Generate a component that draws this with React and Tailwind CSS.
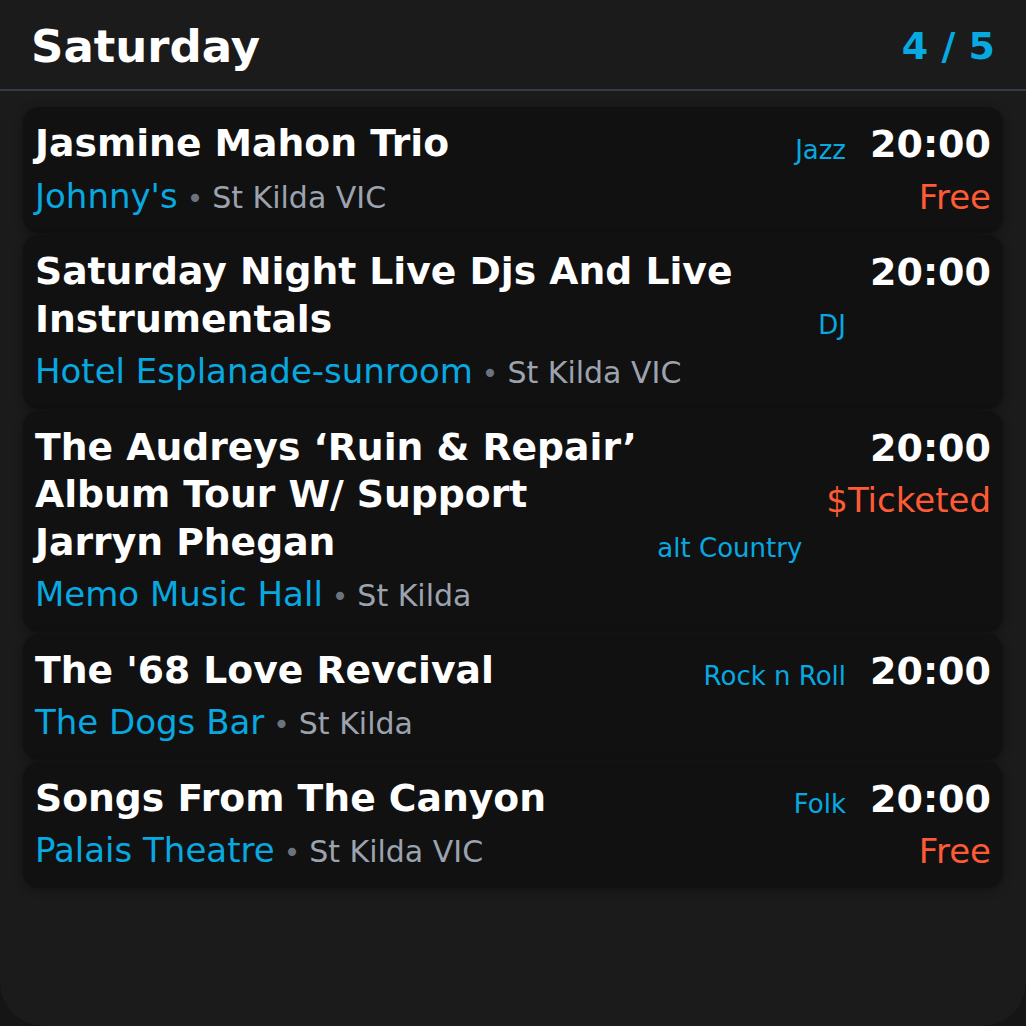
import React from 'react'

const EVENTS = [
  { title: 'Jasmine Mahon Trio', genre: 'Jazz', venue: "Johnny's", suburb: 'St Kilda VIC', time: '20:00', price: 'Free' },
  { title: 'Saturday Night Live Djs And Live Instrumentals', genre: 'DJ', venue: 'Hotel Esplanade-sunroom', suburb: 'St Kilda VIC', time: '20:00' },
  { title: 'The Audreys \u2018Ruin & Repair\u2019 Album Tour W/ Support Jarryn Phegan', genre: 'alt Country', venue: 'Memo Music Hall', suburb: 'St Kilda', time: '20:00', price: '$Ticketed' },
  { title: "The '68 Love Revcival", genre: 'Rock n Roll', venue: 'The Dogs Bar', suburb: 'St Kilda', time: '20:00' },
  { title: 'Songs From The Canyon', genre: 'Folk', venue: 'Palais Theatre', suburb: 'St Kilda VIC', time: '20:00', price: 'Free' },
];

function EventCard({ ev }) {
  return (
    <div className="bg-[#111111] rounded-2xl px-3 pt-[13px] pb-[12.5px] flex gap-6 shadow-[0_2px_10px_rgba(0,0,0,0.35)]">
      <div className="flex-1 min-w-0 flex flex-col">
        <div className="flex items-end gap-4">
          <div className="flex-1 min-w-0 text-[37.7px] font-bold leading-[47.5px] text-white">{ev.title}</div>
          <div className="text-[26px] leading-[35px] text-[#08a8e0] whitespace-nowrap">{ev.genre}</div>
        </div>
        <div className="mt-[6px] text-[34px] leading-[44px] whitespace-nowrap">
          <span className="text-[#08a8e0]">{ev.venue}</span>
          <span className="text-[#6b7280] text-[28px] mx-[9px]">&bull;</span>
          <span className="text-[#9ca3af] text-[30px]">{ev.suburb}</span>
        </div>
      </div>
      <div className="pt-[1px] flex flex-col items-end">
        <div className="text-[38px] font-bold leading-[47.5px] text-white">{ev.time}</div>
        {ev.price && (
          <div className="mt-[6px] text-[34px] leading-[44px] text-[#ff5a36] whitespace-nowrap">{ev.price}</div>
        )}
      </div>
    </div>
  );
}

export default function App() {
  return (
    <div className="min-h-screen bg-[#151515] font-['DejaVu_Sans',sans-serif]">
      <div className="h-[1026px] bg-[#1b1b1b] rounded-b-[44px] overflow-hidden">
        <header className="h-[91px] flex items-center justify-between px-[31px] pt-[3px] border-b-2 border-[#353b47]">
          <h1 className="text-[45px] font-bold text-white leading-none">Saturday</h1>
          <span className="text-[38px] font-bold text-[#08a8e0] leading-none">4 / 5</span>
        </header>
        <div className="px-[23px] pt-[16px] flex flex-col gap-[2px]">
          {EVENTS.map((ev, i) => (
            <EventCard key={i} ev={ev} />
          ))}
        </div>
      </div>
    </div>
  );
}
